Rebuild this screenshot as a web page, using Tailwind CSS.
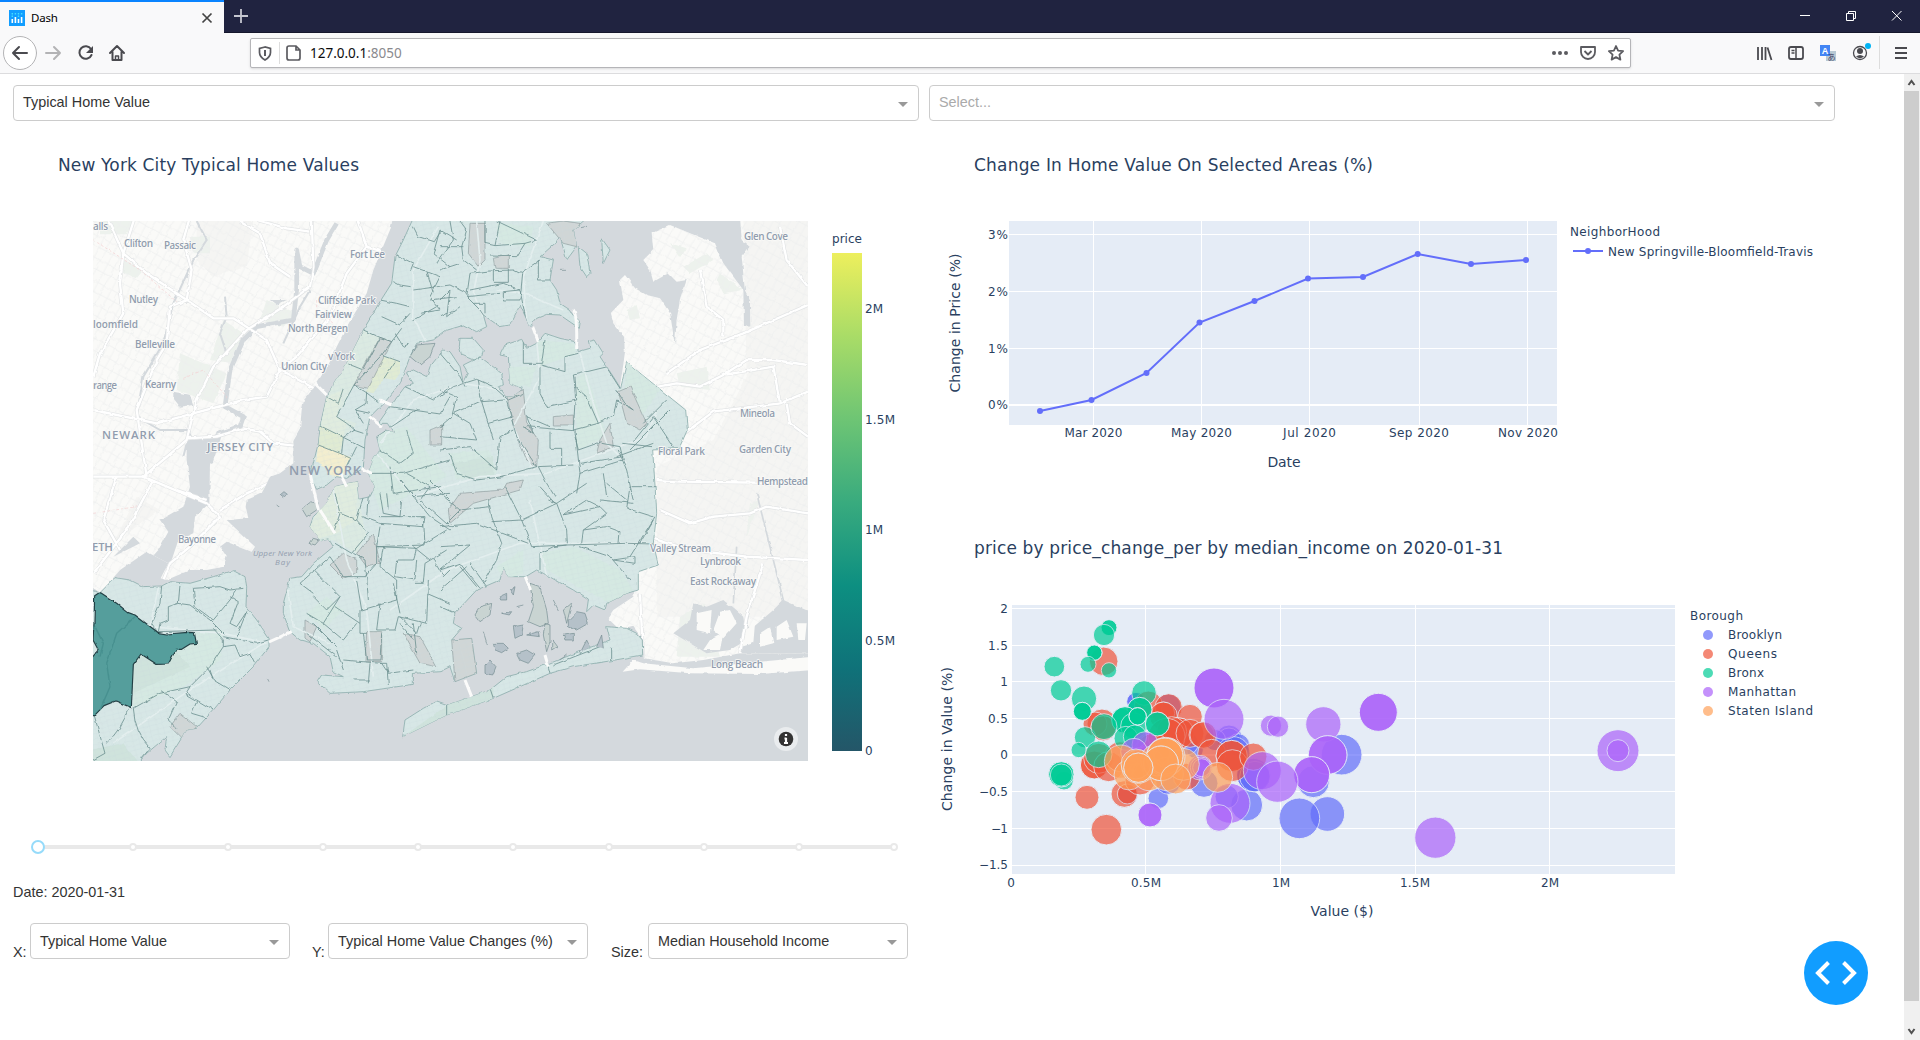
<!DOCTYPE html>
<html lang="en">
<head>
<meta charset="utf-8">
<title>Dash</title>
<script src="https://cdn.jsdelivr.net/npm/@tailwindcss/browser@4"></script>
</head>
<body class="h-[1040px] w-[1920px] overflow-hidden bg-white font-['Liberation_Sans',Arial,sans-serif] text-[14.4px] text-[#333]">
<!-- Tab strip -->
<header class="flex h-[33px] border-b border-[#15172c] bg-[#202340] text-white">
  <div class="flex h-[33px] w-[224px] items-center border-t-2 border-[#0a84ff] bg-[#f9f9fa] pr-[11px] pl-[9px] text-black">
    <svg class="h-4 w-4" viewBox="0 0 16 16"><path fill="#119dff" d="M0 0h16v16H0z"/><path stroke="#fff" stroke-width="1.6" d="M3.3 9v4M6.4 7v6M9.5 9v4M12.6 7v6"/><path stroke="#4df" stroke-width="1.4" stroke-dasharray="1.4 1.2" d="M3.3 3v4M6.4 3v2M9.5 3v4M12.6 3v2"/></svg>
    <span class="ml-[6px] font-['Noto_Sans',sans-serif] text-[11.5px] tracking-[-0.2px]">Dash</span>
    <svg class="ml-auto h-3 w-3" viewBox="0 0 12 12" stroke="#444" stroke-width="1.7"><path d="M1.5 1.5l9 9M10.500 1.500l-9 9"/></svg>
  </div>
  <svg class="mt-[9px] ml-[10px] h-[14px] w-[14px]" viewBox="0 0 14 14" stroke="#c5c6d0" stroke-width="1.8"><path d="M7 0v14M0 7h14"/></svg>
  <svg class="mt-[10px] ml-auto h-[12px] w-[112px]" viewBox="0 0 112 12" fill="none" stroke="#fff"><path d="M8 5.500h10M54.500 3.500h7v7h-7zM56.500 3.500v-2h7v7h-2M100 1l9.500 9.500M109.500 1L100 10.500"/></svg>
  <div class="w-[16px]"></div>
</header>
<!-- Navigation toolbar -->
<nav class="flex h-[41px] items-center border-b border-[#dcdcde] bg-[#f9f9fa]">
  <svg class="h-[40px] w-[250px] shrink-0" viewBox="0 33 250 40" fill="none" stroke="#4a4a4f" stroke-width="2" stroke-linecap="round" stroke-linejoin="round">
    <circle cx="20" cy="53" r="16.500" fill="#fff" stroke="#b4b4b6" stroke-width="1"/>
    <path d="M27 53H13M19 47l-6 6 6 6"/><path stroke="#b3b3b5" d="M46 53h14M54 47l6 6-6 6"/>
    <path d="M91 49a6.300 6.300 0 1 0 .5 6"/><path fill="#4a4a4f" stroke="none" d="M93 46v7h-7z"/>
    <path d="M110 53l7-7 7 7M112.500 52v8h9v-8"/><path stroke-width="1.500" d="M115.500 60v-4h3v4"/>
  </svg>
  <div class="flex h-[30px] w-[1381px] shrink-0 items-center rounded-[2px] border border-[#b5b5b8] bg-white shadow-sm">
    <svg class="h-[28px] w-[56px]" viewBox="251 39 56 28" fill="none" stroke="#5b5b60" stroke-width="1.700"><path d="M265 47l-5.500 1.500v4c0 3.500 2 5.500 5.500 7.500 3.500-2 5.500-4 5.500-7.500v-4z"/><path stroke-width="2" d="M265 50v6"/><path stroke="#ddd" stroke-width="1" d="M279.500 42v22"/><path d="M289 46h7l4 4v8a2 2 0 0 1-2 2h-9a2 2 0 0 1-2-2V48a2 2 0 0 1 2-2zM296 46v4h4"/></svg>
    <span class="mt-px ml-[3px] font-['Noto_Sans',sans-serif] text-[13.5px] text-[#0c0c0d]"><span>127.0.0.1</span><span class="text-[#8a8a8e]">:8050</span></span>
    <svg class="ml-auto h-[28px] w-[84px]" viewBox="1546 39 84 28" fill="none" stroke="#5b5b60" stroke-width="1.800" stroke-linejoin="round"><g fill="#5b5b60" stroke="none"><circle cx="1554" cy="53" r="2"/><circle cx="1560" cy="53" r="2"/><circle cx="1566" cy="53" r="2"/></g><path d="M1581 47h14v5a7 7 0 0 1-14 0zM1584.500 51l3.500 3.500 3.500-3.500"/><path d="M1616 46l2.100 4.600 5 .6-3.700 3.400 1 5-4.400-2.500-4.400 2.500 1-5-3.700-3.400 5-.6z"/></svg>
  </div>
  <svg class="ml-auto h-[40px] w-[180px]" viewBox="1740 33 180 40" fill="none" stroke="#4a4a4f" stroke-width="1.800">
    <path d="M1758 47v13M1762 47v13M1765.500 47v13M1767.500 47.500l4 12.500"/>
    <rect x="1789" y="47" width="14" height="12" rx="2"/><path stroke-width="1.500" d="M1796 47v12M1791.500 50.500h3M1791.500 53h3"/>
    <path fill="#b8c9d4" stroke="none" d="M1826 51h10v10h-10z"/><path fill="#4285f4" stroke="none" d="M1820 45h10v11h-10z"/>
    <text x="1825" y="54" text-anchor="middle" fill="#fff" stroke="none" class="text-[9px] font-bold">A</text><text x="1831.500" y="60" text-anchor="middle" fill="#446" stroke="none" class="font-['Noto_Sans_CJK_JP',sans-serif] text-[8px]">あ</text>
    <circle cx="1860" cy="53" r="6.500" stroke-width="1.300"/><circle cx="1860" cy="51" r="3" fill="#4a4a4f" stroke="none"/><path fill="#4a4a4f" stroke="none" d="M1856 56.500q4-3 8 0-4 3.500-8 0z"/><circle cx="1868" cy="46" r="3" fill="#00b3f4" stroke="none"/>
    <path stroke="#ddd" stroke-width="1" d="M1879.500 36v33"/><path stroke-width="2" d="M1895 48h12M1895 53h12M1895 58h12"/>
  </svg>
</nav>
<div class="flex h-[966px]">
<main class="w-[1904px] pt-[11px] pl-[13px]">
  <div class="flex gap-[10px]">
    <div class="flex h-[36px] w-[906px] items-center justify-between rounded border border-[#ccc] pr-[10px] pl-[9px]"><span>Typical Home Value</span><i class="mt-[2px] border-x-[5px] border-t-[5px] border-x-transparent border-t-[#999]"></i></div>
    <div class="flex h-[36px] w-[906px] items-center justify-between rounded border border-[#ccc] pr-[10px] pl-[9px] text-[#aaa]"><span>Select...</span><i class="mt-[2px] border-x-[5px] border-t-[5px] border-x-transparent border-t-[#999]"></i></div>
  </div>
  <div class="flex">
    <section class="w-[916px]">
      <svg id="choropleth" class="block h-[699px] w-[911px] font-['DejaVu_Sans',Verdana,sans-serif] text-[12px]" viewBox="13 121 911 699" fill="#2a3f5f">
        <defs>
          <clipPath id="frame"><path d="M93 221h715v540H93z"/></clipPath>
          <filter id="rough" x="0" y="0" width="1" height="1"><feTurbulence type="fractalNoise" baseFrequency=".13" numOctaves="2" seed="4" result="n"/><feDisplacementMap in="SourceGraphic" in2="n" scale="3" xChannelSelector="R" yChannelSelector="G"/></filter>
          <pattern id="streets" width="46" height="62" patternUnits="userSpaceOnUse" patternTransform="rotate(28)"><path d="M0 10h46M0 41l46 4M12 0v62M36 0l-5 62" fill="none" stroke="#eeefef" stroke-width="2"/></pattern>
          <pattern id="blocks" width="40" height="30" patternUnits="userSpaceOnUse" patternTransform="rotate(-14)"><path d="M0 8h40M0 22h40M9 0v30M28 0v30" fill="none" stroke="#c7dadb" stroke-width="1.500" opacity=".4"/></pattern>
          <linearGradient id="scale" x1="0" y1="1" x2="0" y2="0"><stop stop-color="#245668"/><stop offset=".167" stop-color="#0f7279"/><stop offset=".333" stop-color="#0d8f81"/><stop offset=".5" stop-color="#39ab7e"/><stop offset=".667" stop-color="#6ec574"/><stop offset=".833" stop-color="#a9dc67"/><stop offset="1" stop-color="#edef5d"/></linearGradient>
          <path id="nj" d="M30 20H940L930 60 905 120 880 180 860 250 830 300 800 350 770 410 745 465 700 535 672 570 665 600 660 655 640 690 640 760 600 790 570 800 545 850 500 870 497 890 505 925 440 930 525 1010 515 1025 440 995 420 1010 440 1040 430 1070 380 1080 330 1080 260 1110 242 1105 265 1060 200 1025 120 1080 60 1150 30 1130Z"/>
          <path id="nassau" d="M1635 430 1632 380 1600 340 1592 310 1630 270 1620 210 1635 195 1665 235 1700 255 1740 265 1770 310 1785 405 1790 330 1800 270 1820 210 1790 215 1765 190 1720 215 1710 180 1690 150 1720 120 1715 70 1770 45 1830 70 1905 100 1930 160 1990 240 1992 350 2012 350 2010 270 1995 240 1985 140 2010 110 1985 90 1980 20H2200V1330H1980L1870 1350 1780 1360 1692 1345 1690 1290 1660 1250 1620 1260 1583 1225 1600 1200 1660 1160 1670 1100 1700 900 1700 700 1620 530Z"/>
          <path id="city" d="M1002 20 970 90 945 140 935 220 900 275 850 360 800 460 770 510 740 560 722 640 715 700 700 760 690 800 710 838 740 825 770 800 800 805 850 775 855 690 870 620 920 570 960 520 990 440 1010 400 1060 390 1100 360 1150 345 1190 365 1220 350 1210 315 1260 350 1290 345 1320 285 1350 350 1370 325 1400 313 1440 315 1498 355 1500 340 1470 300 1440 280 1430 240 1410 210 1420 150 1380 140 1425 100 1440 80 1460 150 1490 110 1480 60 1525 20ZM610 1180 630 1105 665 1100 700 1060 760 1010 745 985 720 990 690 950 700 920 740 880 765 830 830 815 835 868 870 860 885 830 865 790 880 750 900 720 890 680 920 660 945 670 925 640 895 640 930 590 975 530 1000 520 980 490 1000 480 1040 500 1050 470 1090 420 1110 425 1140 470 1150 520 1165 490 1150 465 1200 440 1265 490 1270 525 1255 530 1280 560 1300 560 1330 535 1290 520 1285 440 1260 435 1275 405 1325 388 1340 415 1370 400 1395 370 1440 385 1485 395 1495 425 1530 415 1525 395 1545 390 1570 430 1560 440 1600 500 1622 535 1630 500 1640 457 1817 600 1822 660 1797 715 1718 720 1728 870 1730 910 1720 1000 1735 1065 1675 1085 1675 1140 1640 1150 1580 1180 1575 1200 1540 1185 1520 1205 1525 1170 1480 1140 1390 1090 1370 1080 1337 1100 1285 1100 1270 1070 1260 1110 1190 1140 1125 1210 1120 1240 1145 1255 1115 1290 1175 1285 1190 1390 1125 1415 1110 1370 1080 1385 1000 1390 1000 1423 850 1445 750 1450 712 1415 725 1395 790 1400 760 1385 750 1340 700 1300 660 1290 630 1265 610 1210ZM60 1148 105 1103 150 1110 190 1130 245 1128 270 1115 330 1120 400 1100 460 1082 495 1100 500 1130 498 1190 530 1230 567 1285 567 1310 520 1370 450 1440 400 1500 350 1555 320 1560 270 1640 255 1620 260 1580 200 1630 170 1665H30V1140ZM968 1580 975 1530 1030 1495 1070 1473 1105 1485 1175 1460 1230 1440 1280 1400 1340 1385 1410 1360 1510 1320 1590 1290 1580 1250 1640 1255 1670 1270 1687 1290 1688 1335 1595 1352 1480 1370 1410 1390 1240 1465 1100 1515ZM1140 385 1180 385 1210 420 1205 440 1180 450 1145 435 1138 410ZM1495 110 1520 130 1530 190 1520 200 1500 170ZM1565 85 1590 120 1570 160Z"/>
          <clipPath id="cityclip"><use href="#city"/></clipPath><clipPath id="landclip"><use href="#nj"/><use href="#nassau"/></clipPath>
        </defs>
        <text x="58" y="170.500" textLength="301" class="text-[17px]">New York City Typical Home Values</text>
        <g clip-path="url(#frame)">
          <path fill="#d4d9dd" d="M93 221h715v540H93z"/>
          <g filter="url(#rough)"><g transform="translate(80 210) scale(.33333)" fill="none" stroke-linejoin="round">
            <g fill="#fafaf8"><use href="#nj"/><use href="#nassau"/><path d="M1628 1385 1660 1350 1690 1360 1840 1375 2200 1340V1380L2040 1392 1830 1390 1680 1378Z"/></g>
            <g clip-path="url(#landclip)">
              <path fill="#f5f5f3" d="M350 33H520L500 170 400 200 350 150ZM1990 20h210v1200h-470V770L1900 690 2000 500ZM100 1000 170 860 240 900Z"/>
              <g fill="#edf2ed"><path d="M60 33h100l-20 40H60ZM130 150l60 30-20 25-45-20ZM430 330l60 40-30 90-70-10ZM300 430l140 60-40 90-110-40ZM560 270l90 40-40 40-70-20ZM540 830l80-20-30 60ZM330 80h60v50h-50ZM1810 170l70-40 20 20-70 40ZM1920 190l70 50-60 10-20-40ZM1790 490l90-20 10 70-90-10ZM1640 300l30-15 10 40-30 5ZM1800 1220l70-40 50 160h-130ZM2010 880l30-10-40 110ZM1770 100l50 15-20 30Z"/></g>
              <path fill="url(#streets)" d="M30 20h2200v1400H30z"/>
              <g stroke="#d4d9dd" stroke-width="14"><path d="M770 40 740 90 700 190 660 170 650 120 650 240 640 330 530 350 490 390 450 480 435 590 490 620 480 650 420 670 390 760" /><path stroke-width="6" d="M350 33 380 90 340 150 280 280 250 400 190 500 170 620 240 660 330 660 310 740M435 260 440 320 420 370 440 430M690 240 660 290 610 400"/><path stroke-width="5" d="M2060 1390 2000 1240 2010 1190M1960 1180 1970 1010M2120 1210 2030 850"/></g>
              <path fill="#d4d9dd" d="M320 650 340 690 400 680 420 665 390 760 388 880 345 920 340 970 295 990 265 1080 200 1060 235 1020 265 965 240 930 310 890 330 830 320 750Z"/>
              <path fill="#d4d9dd" d="M1840 1180 1880 1190 1930 1170 1990 1220 2000 1290 1950 1320 1880 1330 1780 1270 1830 1230ZM2010 1260 2080 1200 2110 1170 2200 1210V1330H1980ZM570 270h50l-30 15ZM280 545l50 10 10 30-40 5-20-25ZM100 1040l60-60 20 20Z"/>
              <g fill="#fafaf8"><path d="M1850 1210 1895 1200 1890 1270 1850 1260ZM1920 1205 1950 1200 1970 1240 1930 1285 1900 1260ZM1990 1265 2025 1240 2020 1300 1985 1310ZM2090 1250 2120 1230 2140 1280 2090 1290ZM1890 1290 1930 1270 1920 1320 1870 1320ZM2040 1270 2070 1250 2080 1300 2040 1310ZM2150 1240h30l-5 50h-20Z"/></g>
              <g stroke="#e3e5e6" stroke-width="11"><path id="hw" d="M80 20 130 130 200 190 320 270 400 325 460 325 560 390 600 480 740 555M165 20 130 130 120 220 130 310 60 430 40 500M320 270 270 290 260 400 230 450 170 600 200 800M330 20 310 90 335 180 320 270M695 20 700 170 690 230 610 290 500 360 400 470 350 570 320 690 190 800 40 800M530 30 620 55 690 65M830 20 860 110 940 135M860 110 800 190 750 320 650 440 600 480 560 560 490 570 340 610 230 640 40 600M320 685 410 680 490 655 540 665 580 700 720 715M480 35 540 70 570 160 630 200M40 800 110 800 190 800 380 880 420 920 330 1010 270 1060 250 1110M110 800 70 930 120 1020M220 810 140 960 40 1090M380 870 290 840M420 900 500 850 610 800M1620 550 1790 520 1860 530 1930 495 2000 450 2080 450 2184 465M1930 495 2080 470 2100 580 2184 545M2100 580 1900 605 1800 680M2120 580 2130 640 2184 680M1740 900 1830 940 1900 920 2010 910 2060 890 2184 910M1730 810 1800 815 2184 820M1700 980 1830 1020 2000 1040 2184 1050M1760 490 1860 420 1990 370 2184 285M1860 180 1880 290 1930 330 1930 380M2100 50 2120 150 2184 230M2050 1060 2000 1220 1980 1330M1680 1150 1690 1350"/></g>
              <use href="#hw" stroke="#fff" stroke-width="7"/>
              <path stroke="#f3cfd0" stroke-width="2" stroke-dasharray="8 6" d="M40 90 180 180 290 275M310 505 370 480 440 560M40 910 170 890M710 270v30l50 40"/>
            </g>
            <use href="#city" fill="#d7e7e6" stroke="#8cadac" stroke-width="2.500"/>
            <g clip-path="url(#cityclip)">
              <path fill="#dbeae2" d="M850 360 900 382 822 525 770 620 830 640 790 682 722 648 740 560ZM690 950 760 815 830 815 850 940 860 970 830 1030 760 990 700 990Z"/>
              <path fill="#e0ecdf" d="M740 560 722 648 790 682 800 640 770 620 790 540ZM690 950 760 815 830 815 830 930 770 970 700 990Z"/>
              <path fill="#d5e9e2" d="M1640 457 1740 540 1690 610 1630 590ZM1490 500 1520 490 1580 680 1490 720ZM1370 390 1480 400 1490 430 1380 470ZM1110 730 1230 720 1250 790 1130 810ZM900 670 980 650 1100 800 900 900 860 790ZM680 1210 740 1160 790 1200 730 1260ZM160 1330 360 1260 430 1260 420 1350 310 1430 160 1490ZM1380 1030 1480 1010 1620 1080 1660 1140 1590 1180 1400 1080ZM1250 1070 1330 1020 1330 1090 1270 1110ZM1250 40 1360 50 1350 110 1260 100ZM1280 470 1370 470 1350 530 1290 530Z"/>
              <path fill="#cfe3dc" d="M160 1330 250 1280 330 1370 160 1450ZM968 1580 1110 1480 1240 1430 1240 1465ZM30 1620 130 1600 180 1665H30ZM1110 760 1240 740 1240 800 1170 810Z"/>
              <path fill="#e0ebd3" d="M905 435 960 455 960 490 945 510 912 505 880 550 858 545ZM722 648 790 682 780 730 715 705Z"/><path fill="#f3eecf" d="M715 705 780 730 812 742 800 765 785 800 750 795 735 770 708 755Z"/>
              <g fill="#d0d6d6" stroke="#8b9a9c" stroke-width="2"><path d="M900 382 935 395 865 535 822 525ZM1170 40h45v110l-20 20-30-40ZM1400 40 1450 33 1500 40 1490 110 1450 100ZM1280 555 1330 540 1340 640 1375 690 1370 770 1340 750 1300 650ZM1615 545 1650 530 1700 640 1680 660 1640 640ZM1420 620l60-5v30h-60ZM1105 900 1140 850 1270 840 1280 820 1330 810 1320 840 1180 880 1110 940ZM830 1030 880 970 900 1060 860 1070ZM750 1065 790 1030 830 1050 830 1090 790 1105ZM860 1265h45v90h-50ZM675 1230l35 20-20 45-15-10ZM970 1270 1020 1280 1070 1370 1020 1360ZM270 1550 300 1510 350 1550 310 1590ZM1115 1290 1175 1285 1190 1390 1125 1415ZM1240 145l45-10v40h-40ZM1050 660l35-15v60h-35ZM1560 690 1590 640 1600 710 1550 730Z"/></g>
              <path fill="url(#blocks)" d="M30 20h1800v1640H30z"/>
              <g stroke="#e3eeee" stroke-width="5"><path d="M1075 50 1000 180 998 320 1040 400M1190 33 1200 150 1180 250 1210 320M1390 33 1330 200 1340 330 1370 390 1380 500 1300 650 1360 780M1250 240 1330 250 1450 300M1500 430 1540 580 1580 700 1640 760M880 720 1000 860 1200 800 1400 790 1700 680 1730 600M620 1120 640 1250 750 1300M760 840 800 1050 860 1200 880 1400M1260 540 1150 520 1000 570 900 700M240 1110 210 1250 430 1270 560 1300M550 1300 300 1460 100 1600M1350 870 1400 1100M930 1200 1100 1080 1320 1000 1700 1000"/></g>
              <g stroke="#6f9292" stroke-width="2.500">
                <path d="M1000 50 1015 80 1063 95 1085 60M947 135 1000 160 992 180M940 215 960 225 992 230M900 270 950 280 990 290M905 320 960 345 990 310M850 360 900 382 935 395 965 355M935 395 905 435 822 525 855 545 895 575M905 435 960 455M945 455 912 505M805 462 850 480 900 385M945 370 970 410 990 400M822 525 770 620 800 640M740 560 775 580 790 535M860 545 858 580 825 600 850 640M722 648 790 682 855 715M800 640 825 660 790 682 785 730M715 705 780 730 812 745 800 770M825 600 870 610M820 660 850 670M830 710 815 740M1000 170 1080 200 1050 260 1080 300 1020 310M1050 270 1130 260M1080 60 1060 130 1110 170M1110 33 1120 90 1070 160M1040 180 1060 250M1000 240 1110 225 1160 250M1000 330 1070 290"/>
                <path d="M930 590 1080 612 1110 560M975 530 1060 570 1110 530M890 680 1010 600M900 720 960 760 1000 730 980 660M870 790 970 790 1110 750M930 770 940 850 1080 830M980 790 1050 830 1020 870 1110 950M960 810 1000 860 1110 850"/>
                <g transform="translate(1080 0)"><path d="M135 33V100L165 107 255 100 290 90 170 33M180 33 165 107M60 33 80 60 65 110 70 150 110 180M0 60 50 90M0 110 70 110M0 180 60 160M150 138 230 140 255 100M90 190 160 182 220 180 240 190 300 150M160 182v35h45v-40M90 240 190 220 240 240 190 245v25h50l8-80M90 190 80 260 120 300 140 330M80 260 180 250M100 280h35v30M295 150v60h35M0 270 30 240 20 320 60 290M0 320 40 300M240 240 260 340M0 560 40 530 110 508 160 530 205 570 250 550M115 510 125 575 195 570M40 610 130 570M0 540 50 560 35 620 0 650M40 610 90 640 110 690 0 680M125 575 145 640 220 620M145 640 160 690M0 720 90 710 170 780 180 680 220 660M30 730 50 790 110 810 190 800M250 390v70h55l10-70M305 465 375 485 375 440 415 430M300 470 300 550 320 590 410 570 405 500M400 495 503 470M400 495 405 530 440 560 475 640 400 660 405 575M475 640 515 620M400 660 415 720 485 695M505 480 540 535M260 650 400 662M405 660 420 790 550 750 540 710 485 700M330 665v50h35v50M295 770 400 765M295 770 320 820 345 860M180 800 290 770M420 790 410 850M535 720 560 780 580 870M420 760 550 740M580 695 640 620 700 710M550 700 635 710M530 740 640 700M490 790 500 860M575 830H648M200 575 230 680 290 770M250 650 280 670 260 620 330 650M530 540 555 580 580 600 530 570 520 620M610 640 680 570M570 720 690 600M0 430 60 500 75 530"/></g>
                <g transform="translate(1080 810)"><path d="M195 20 245 120 275 200 380 195 560 190 640 192M325 60 350 70 380 150 382 190M245 120 350 70 440 10M300 20 345 70M145 55 155 110 185 190 170 240M245 120 155 125M0 140 110 130 265 190M370 105 480 80 500 100 430 150 425 190M370 105 440 60 480 80M430 150 500 140 540 155 537 190M500 10 560 60M570 20 560 85 640 110M480 60 580 70M0 200 90 195 0 270M60 260 110 320M90 250 140 320M170 240 130 310M0 380 45 400 75 430M300 270 300 220 340 200 380 195M520 240 585 250 585 230 520 240 M570 300 510 230 420 200M600 190 640 120M645 110 570 230M120 325 60 250 0 270M0 330 80 260M330 580 320 540M515 540V500M160 655 150 625M20 705V670M340 555 480 500M0 40 60 90 150 80M60 90 20 130"/></g>
                <g transform="translate(0 810)"><path d="M765 40 780 100 830 120 850 50M830 120 865 160 815 220 765 190M780 100 760 160M845 110 900 130 1030 140 1035 110 900 110M900 40 910 100 960 110 965 60M1030 110 1035 195 890 200 900 140M835 40 865 45 860 110M920 40 925 90M960 0 1050 110 1110 150M890 200 1010 205 1100 150M1010 205 1000 240 950 240 945 290 1005 300 1010 240M890 200 890 250 855 290 790 290 750 230M820 220 855 240 860 290M750 230 660 310M700 270 780 350 740 390 700 350M660 310 700 340M780 350 730 430 680 400M765 380 840 430M730 430 790 480 830 430M700 430 770 500M680 460 770 530M840 390V460L860 460M830 300 845 390 950 360 950 300 900 260 910 200M860 290 865 360M900 370 890 450 945 450 955 410 1040 430 1045 300M940 310 960 400M1005 310 1030 310 1035 250 1100 210M1000 200 1050 240M850 460 860 540 900 540 905 460M790 540 905 550 925 580 1000 570M870 550 865 610M895 550 920 550 925 615M770 510 790 570M820 600 870 600M960 410 1010 460 1020 430M1040 340 1110 370M1050 0 1110 60M1060 240 1090 290 1110 270M960 430 1000 480M1000 430 1010 520"/><path d="M245 318 240 370 215 430 235 460M300 315 295 370 265 380 265 420 240 430 235 455 410 450M295 370 330 375 390 420 430 460M340 325 345 380 400 420 450 360 470 330M340 325 420 320 450 330 490 325M450 350 475 365 450 430 470 440 500 395M400 445 430 480 430 500 465 495 480 530 510 520 525 550M430 470 530 490 565 480M500 395 470 470M430 500 390 560 330 620 240 640 160 685M390 570 400 600 450 630M320 640 350 660 400 690M240 630 290 665 265 720 290 745M330 620 315 645 350 665 335 700 385 715M160 685Q165 760 210 805L185 835M145 685Q125 750 78 790M43 707 75 820 39 840M380 560 400 595"/></g>
              </g>
            </g>
            <g fill="#b5c1c9" stroke="#748c91" stroke-width="2"><path d="M1465 1230 1490 1205 1515 1210 1525 1240 1490 1260 1465 1250ZM1310 1330 1340 1320 1365 1335 1345 1360 1320 1350ZM1240 1300 1270 1300 1285 1315 1265 1328 1245 1320ZM1215 1365 1230 1350 1248 1370 1238 1395 1215 1390ZM1300 1250 1330 1245 1325 1275 1305 1285ZM1340 1275 1375 1265 1378 1280ZM1450 1275 1480 1270 1480 1290 1455 1290ZM1258 1160 1280 1150 1280 1170 1262 1170ZM1290 1140 1305 1130 1300 1155ZM1265 1210 1295 1205 1288 1215Z"/><path fill="#c9d4d2" d="M1185 1215 1200 1190 1235 1180 1230 1215 1200 1235ZM1345 1235 1360 1190 1350 1120 1380 1130 1400 1200 1405 1240 1380 1250ZM1450 1200 1475 1180 1460 1240ZM1418 1290l15 20-15 10ZM1395 1240l15 5v50l-10 30-10-50ZM665 895 690 875 715 880 710 900 680 920ZM990 440 1010 405 1065 400 1050 440 1020 465ZM690 1000 700 985 718 990 705 1005Z"/><path d="M1210 1265l12 40M1420 1170l15 30M1310 1190l20-5M1500 50l18-4M1440 178h18M600 855l12-10 10 8-12 10ZM590 885l10 8M562 1405l5 10M1500 1330l20-40 10 20M1440 1350l20-15M1550 1310l15-35 5 40"/></g>
            <path fill="#549e9c" stroke="#233f44" stroke-width="3.500" d="M62 1148 110 1180 145 1208 165 1215 235 1268 260 1272 325 1267 343 1268 349 1300 330 1302 305 1318 288 1318 265 1362 230 1363 183 1332 160 1363 154 1493 107 1473 72 1487 43 1517H30V1350L55 1320 39 1290 42 1240 44 1160Z"/>
            <path stroke="#47908f" stroke-width="4" d="M165 1220 110 1270 80 1360 90 1430 60 1500M45 1250 70 1300 60 1340"/>
            <path stroke="#fbfbfa" stroke-width="9" d="M567 1296 635 1265M690 790 715 900M780 790 800 830M740 555 705 520M868 620 905 650M900 570 935 585M845 775 875 790M1358 350 1375 395M1480 300Q1492 310 1490 420M1336 1100 1352 1140M1395 1335 1405 1370M1155 1410 1175 1460M720 900 765 970"/>
          </g></g>
          <g class="font-['Open_Sans','Noto_Sans',sans-serif] text-[10px] font-semibold" fill="#919dae" stroke="#fafaf8" stroke-width="1.500" paint-order="stroke" stroke-linejoin="round">
            <text x="93" y="230" textLength="15">alls</text><text x="124" y="247" textLength="29">Clifton</text><text x="164" y="249" textLength="32">Passaic</text><text x="350" y="258" textLength="35">Fort Lee</text><text x="129" y="303" textLength="29">Nutley</text><text x="318" y="304" textLength="58">Cliffside Park</text><text x="315" y="318" textLength="37">Fairview</text><text x="93" y="328" textLength="45">loomfield</text><text x="288" y="332" textLength="60">North Bergen</text><text x="135" y="348" textLength="40">Belleville</text><text x="328" y="360" textLength="27">v York</text><text x="281" y="370" textLength="46">Union City</text><text x="145" y="388" textLength="31">Kearny</text><text x="93" y="389" textLength="24">range</text><text x="178" y="543" textLength="38">Bayonne</text>
            <text x="744" y="240" textLength="44">Glen Cove</text><text x="740" y="417" textLength="35">Mineola</text><text x="658" y="455" textLength="47">Floral Park</text><text x="739" y="453" textLength="52">Garden City</text><text x="757" y="485" textLength="51">Hempstead</text><text x="650" y="552" textLength="61">Valley Stream</text><text x="700" y="565" textLength="41">Lynbrook</text><text x="690" y="585" textLength="66">East Rockaway</text><text x="711" y="668" textLength="52">Long Beach</text>
            <g class="text-[11.500px]"><text x="102" y="439" textLength="53">NEWARK</text><text x="207" y="451" textLength="66">JERSEY CITY</text><text x="289" y="475" textLength="72" class="text-[13px]" stroke="none">NEW YORK</text><text x="92" y="551" textLength="21">ETH</text></g>
            <g class="text-[8px] font-normal italic" stroke="none"><text x="253" y="556" textLength="59">Upper New York</text><text x="275" y="565" textLength="15">Bay</text></g>
          </g>
          <circle cx="786" cy="739" r="12" fill="#e9ecee"/><circle cx="786" cy="739" r="7.300" fill="#333"/><path stroke="#fff" stroke-width="2.200" d="M786 738v5.500M786 734v2M784.500 738.500h2M784 743h4"/>
        </g>
        <text x="832" y="242.500" textLength="30">price</text><path fill="url(#scale)" d="M832 253h30v498h-30z"/>
        <g><text x="865" y="755">0</text><text x="865" y="644.500" textLength="30">0.5M</text><text x="865" y="533.500" textLength="18">1M</text><text x="865" y="423.500" textLength="30">1.5M</text><text x="865" y="312.500" textLength="18">2M</text></g>
      </svg>
      <!-- Month slider -->
      <div class="mt-[20px] ml-[18px] flex h-[14px] w-[867px] items-center">
        <svg class="h-[14px] w-[867px] overflow-visible" viewBox="31 841 867 14"><path stroke="#e9e9e9" stroke-width="4" d="M38 848h856"/><g fill="#fff" stroke="#e9e9e9" stroke-width="2"><circle cx="133" cy="848" r="3"/><circle cx="228" cy="848" r="3"/><circle cx="323" cy="848" r="3"/><circle cx="418" cy="848" r="3"/><circle cx="513" cy="848" r="3"/><circle cx="609" cy="848" r="3"/><circle cx="704" cy="848" r="3"/><circle cx="799" cy="848" r="3"/><circle cx="894" cy="848" r="3"/></g><circle cx="38" cy="848" r="6" fill="#fff" stroke="#96dbfa" stroke-width="2"/></svg>
      </div>
      <p class="mt-[29px] h-[18px] leading-[18px]">Date: 2020-01-31</p>
      <div class="mt-[22px] flex h-[36px] items-end leading-[13px]">
        <span class="w-[17px]">X:</span><div class="flex h-[36px] w-[260px] items-center justify-between rounded border border-[#ccc] pr-[10px] pl-[9px]"><span>Typical Home Value</span><i class="mt-[2px] border-x-[5px] border-t-[5px] border-x-transparent border-t-[#999]"></i></div>
        <span class="ml-[22px] w-[16px]">Y:</span><div class="flex h-[36px] w-[260px] items-center justify-between rounded border border-[#ccc] pr-[10px] pl-[9px]"><span>Typical Home Value Changes (%)</span><i class="mt-[2px] border-x-[5px] border-t-[5px] border-x-transparent border-t-[#999]"></i></div>
        <span class="ml-[23px] w-[37px]">Size:</span><div class="flex h-[36px] w-[260px] items-center justify-between rounded border border-[#ccc] pr-[10px] pl-[9px]"><span>Median Household Income</span><i class="mt-[2px] border-x-[5px] border-t-[5px] border-x-transparent border-t-[#999]"></i></div>
      </div>
    </section>
    <section class="flex w-[939px] flex-col">
      <svg class="block h-[815px] w-[906px] font-['DejaVu_Sans',Verdana,sans-serif] text-[12px]" viewBox="929 121 906 815" fill="#2a3f5f">
        <text x="974" y="170.500" textLength="399" class="text-[17px]">Change In Home Value On Selected Areas (%)</text>
        <path fill="#e5ecf6" d="M1009 221h548v204h-548zM1010 605h665v269h-665z"/>
        <path stroke="#fff" fill="none" d="M1093.500 221v204M1201.500 221v204M1309.500 221v204M1419.500 221v204M1527.500 221v204M1009 234.500h548M1009 291.500h548M1009 348.500h548M1145.500 605v269M1280.500 605v269M1415.500 605v269M1549.500 605v269M1010 608.500h665M1010 645.500h665M1010 681.500h665M1010 718.500h665M1010 791.500h665M1010 828.500h665M1010 865.500h665"/>
        <path stroke="#fff" stroke-width="2" d="M1009 405h548M1010 755h665M1011 605v269"/>
        <g fill="#636efa"><path fill="none" stroke="#636efa" stroke-width="2" d="M1040 411 1091.500 400 1146.500 373 1199.500 322.500 1254.500 301 1308 278.500 1363 277 1417.700 254 1471 264 1526 260M1573 251h30"/><g id="dots"></g><circle cx="1588" cy="251" r="3"/></g>
        <g text-anchor="end"><text x="1008" y="238.500" textLength="20">3%</text><text x="1008" y="295.500" textLength="20">2%</text><text x="1008" y="352.500" textLength="20">1%</text><text x="1008" y="408.500" textLength="20">0%</text>
        <text x="1008" y="612.500">2</text><text x="1008" y="649.500" textLength="20">1.5</text><text x="1008" y="685.500">1</text><text x="1008" y="722.500" textLength="20">0.5</text><text x="1008" y="758.500">0</text><text x="1008" y="795.500" textLength="29">−0.5</text><text x="1008" y="832.500" textLength="17">−1</text><text x="1008" y="868.500" textLength="29">−1.5</text></g>
        <g text-anchor="middle"><text x="1093.500" y="437" textLength="58">Mar 2020</text><text x="1201.500" y="437" textLength="61">May 2020</text><text x="1309.500" y="437" textLength="53">Jul 2020</text><text x="1419" y="437" textLength="60">Sep 2020</text><text x="1528" y="437" textLength="60">Nov 2020</text>
        <text x="1011" y="887">0</text><text x="1146" y="887" textLength="30">0.5M</text><text x="1281" y="887" textLength="18">1M</text><text x="1415" y="887" textLength="30">1.5M</text><text x="1550" y="887" textLength="18">2M</text>
        <g class="text-[14px]"><text x="1284" y="466.500" textLength="33">Date</text><text x="1342" y="916" textLength="63">Value ($)</text><text transform="translate(960 323) rotate(-90)" textLength="139">Change in Price (%)</text><text transform="translate(952 739) rotate(-90)" textLength="144">Change in Value (%)</text></g></g>
        <text x="1570" y="236" textLength="90">NeighborHood</text><text x="1608" y="256" textLength="205">New Springville-Bloomfield-Travis</text>
        <text x="974" y="554" textLength="529" class="text-[17px]">price by price_change_per by median_income on 2020-01-31</text>
        <g id="bubbles" transform="translate(1000 590) scale(.33333)" stroke="#e5ecf6" stroke-width="3"></g>
        <text x="1690" y="620" textLength="53">Borough</text>
        <g fill-opacity=".7"><circle cx="1708" cy="635" r="5" fill="#636efa"/><circle cx="1708" cy="654" r="5" fill="#ef553b"/><circle cx="1708" cy="673" r="5" fill="#00cc96"/><circle cx="1708" cy="692" r="5" fill="#ab63fa"/><circle cx="1708" cy="711" r="5" fill="#ffa15a"/></g>
        <text x="1728" y="639" textLength="54">Brooklyn</text><text x="1728" y="658" textLength="49">Queens</text><text x="1728" y="677" textLength="36">Bronx</text><text x="1728" y="696" textLength="68">Manhattan</text><text x="1728" y="715" textLength="85">Staten Island</text>
      </svg>
      <div class="mt-[5px] flex h-[64px] w-[64px] items-center justify-center self-end rounded-full bg-[#119dff]">
        <svg class="h-[64px] w-[64px]" viewBox="0 0 64 64" fill="none" stroke="#fff" stroke-width="4"><path d="M24.500 21.500L14 32l10.500 10.500M39.500 21.500L50 32 39.500 42.500"/></svg>
      </div>
    </section>
  </div>
</main>
<aside class="flex w-[16px] flex-col bg-[#f0f0f0]">
  <svg class="h-[17px] w-[15px]" viewBox="0 0 15 17" fill="none" stroke="#505050" stroke-width="2"><path d="M4.500 11l3-4 3 4"/></svg>
  <div class="h-[910px] w-[15px] bg-[#cdcdcd]"></div>
  <svg class="mt-auto h-[17px] w-[15px]" viewBox="0 0 15 17" fill="none" stroke="#505050" stroke-width="2"><path d="M4.500 6l3 4 3-4"/></svg>
</aside>
</div>
<script>
// Monthly markers of the line chart
document.getElementById('dots').innerHTML = [[1040,411],[1091.5,400],[1146.5,373],[1199.5,322.5],[1254.5,301],[1308,278.5],[1363,277],[1417.7,254],[1471,264],[1526,260]].map(([x,y])=>`<circle cx="${x}" cy="${y}" r="3"/>`).join('');
// Neighborhood bubbles: x, y, radius, repeat count
const boroughs = [
 ['#636efa',[[408,335,28,2],[1025,494,61],[982,672,52],[898,685,61],[940,575,48],[740,645,48],[687,445,40],[687,450,36],[715,465,34],[475,625,31],[505,575,38],[612,580,42],[760,555,50,2],[765,560,46],[680,620,35],[383,615,30],[585,480,25],[645,450,32],[700,490,50],[505,350,38],[560,460,35],[435,470,44]]],
 ['#ef553b',[[311,214,43],[261,622,36],[319,719,46],[306,402,45],[285,402,36],[310,415,38],[283,525,42,2],[296,505,45],[326,530,45],[373,612,40],[382,612,30],[445,345,42],[506,352,41],[490,370,34],[490,378,42],[570,380,37],[535,430,47,2],[515,425,45],[500,440,55],[570,430,42],[605,435,38],[610,435,40],[635,490,42],[695,498,47,2],[697,527,48],[760,500,41],[420,570,45],[560,560,40],[500,500,50],[460,480,50],[440,520,50],[360,500,45]]],
 ['#00cc96',[[327,113,24,2],[312,135,32],[283,188,23,3],[264,223,24],[327,241,23],[163,230,31],[183,301,32],[252,326,38],[247,364,27,3],[255,442,32],[236,480,23],[432,309,37],[419,359,37,2],[365,385,30],[375,390,40,2],[401,408,39],[472,402,36,2],[312,410,39],[296,493,40],[378,445,36],[405,440,35],[413,379,26,3],[192,572,28],[184,553,38,2],[184,555,33]]],
 ['#ab63fa',[[642,294,60,2],[672,388,60],[813,407,32],[834,410,32],[970,403,53],[983,495,58,2],[935,554,54,2],[787,542,57],[832,575,62],[690,640,60],[657,684,40],[450,675,36,2],[436,465,40],[402,485,40],[600,533,37],[603,533,32],[605,533,27],[1135,367,57,2],[1854,482,63],[1854,482,33],[1306,743,62]]],
 ['#ffa15a',[[363,515,50],[387,555,45],[447,552,50],[415,530,50],[500,552,50],[550,523,48],[470,510,48],[505,490,45],[497,500,58],[495,498,54,2],[483,520,52,2],[408,522,45],[415,533,44,2],[527,567,45],[653,562,45]]]];
document.getElementById('bubbles').innerHTML = boroughs.map(([c,b])=>b.map(([x,y,r,n=1])=>`<circle cx="${x}" cy="${y}" r="${r}" fill="${c}" opacity=".7"/>`.repeat(n)).join('')).join('');
</script>
</body>
</html>
